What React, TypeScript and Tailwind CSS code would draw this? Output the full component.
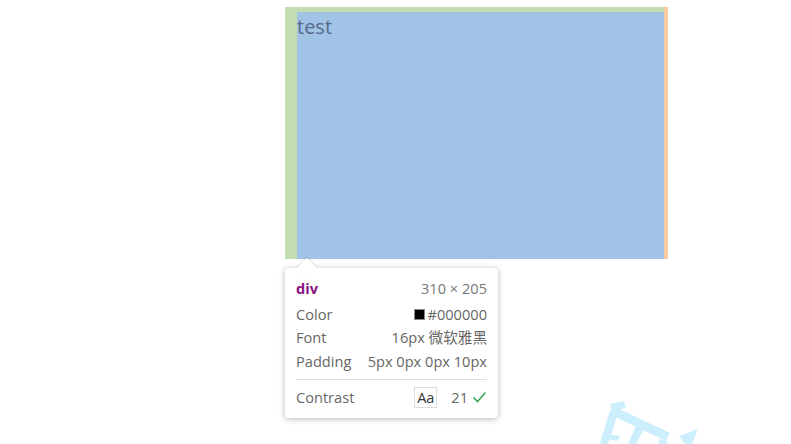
const font = { fontFamily: '"Open Sans", "Noto Sans", "Noto Sans CJK SC", sans-serif' };

const Row = ({ label, children }: { label: string; children: React.ReactNode }) => (
  <div className="flex h-[23.5px] items-center justify-between">
    <span>{label}</span>
    <span className="flex items-center">{children}</span>
  </div>
);

const Watermark = () => (
  <svg className="absolute left-[590px] top-[400px]" width="201" height="44" viewBox="590 400 201 44">
    <g fill="#cdeefd">
      <polygon points="610,404 624,401 626,408 612,411" />
      <polygon points="613,406 670,433 666,441 609,414" />
      <polygon points="610,410 618,413 608,444 600,444" />
      <polygon points="638,421 646,425 636,444 628,444" />
      <polygon points="603,433 620,436 618,441 601,438" />
      <polygon points="659,439 667,441 667,444 659,444" />
      <polygon points="679,436 698,429 692,444 685,444" />
    </g>
  </svg>
);

export default function App() {
  return (
    <div className="relative h-[444px] w-[791px] overflow-hidden bg-white" style={font}>
      <div className="pl-[285px] pt-[7px]">
        <div className="flex h-[252px] w-[383px]">
          <div className="flex-1 bg-[#c3dcb3] pl-[12px] pt-[5px]">
            <div className="h-full bg-[#a1c4e6] pt-[1px] text-[20px] leading-[28px] text-[#56698a]">test</div>
          </div>
          <div className="w-[4px] bg-[#f7cba3]" />
        </div>

        <div className="relative mt-[9px] w-[213px] rounded-[4px] bg-white px-[11px] pb-[7px] pt-[9px] text-[14.6px] text-[#666] shadow-[0_1px_6px_rgba(0,0,0,0.28)]">
          <div className="absolute -top-[7px] left-[15px] h-[14px] w-[14px] rotate-45 bg-white shadow-[-1px_-1px_2px_rgba(0,0,0,0.12)]" />
          <div className="relative">
            <div className="flex h-[24px] items-center justify-between">
              <span className="font-bold text-[#881280]">div</span>
              <span className="text-[#777]">310 × 205</span>
            </div>
            <div className="mt-[2px]">
              <Row label="Color">
                <span className="mr-[3px] inline-block h-[11px] w-[11px] border border-[#888] bg-black" />
                #000000
              </Row>
              <Row label="Font">16px 微软雅黑</Row>
              <Row label="Padding">5px 0px 0px 10px</Row>
            </div>
            <div className="mb-[5px] mt-[5px] h-px bg-[#ddd]" />
            <div className="flex h-[26px] items-center justify-between">
              <span>Contrast</span>
              <span className="flex items-center">
                <span className="flex h-[21px] w-[23px] items-center justify-center border border-[#ddd] text-[#333]">
                  Aa
                </span>
                <span className="ml-[14px]">21</span>
                <svg className="ml-[4px]" width="15" height="12" viewBox="0 0 15 12">
                  <path d="M1.5 6.5 L5.5 10.5 L13.5 1.5" fill="none" stroke="#3aa757" strokeWidth="1.6" />
                </svg>
              </span>
            </div>
          </div>
        </div>
      </div>
      <Watermark />
    </div>
  );
}
